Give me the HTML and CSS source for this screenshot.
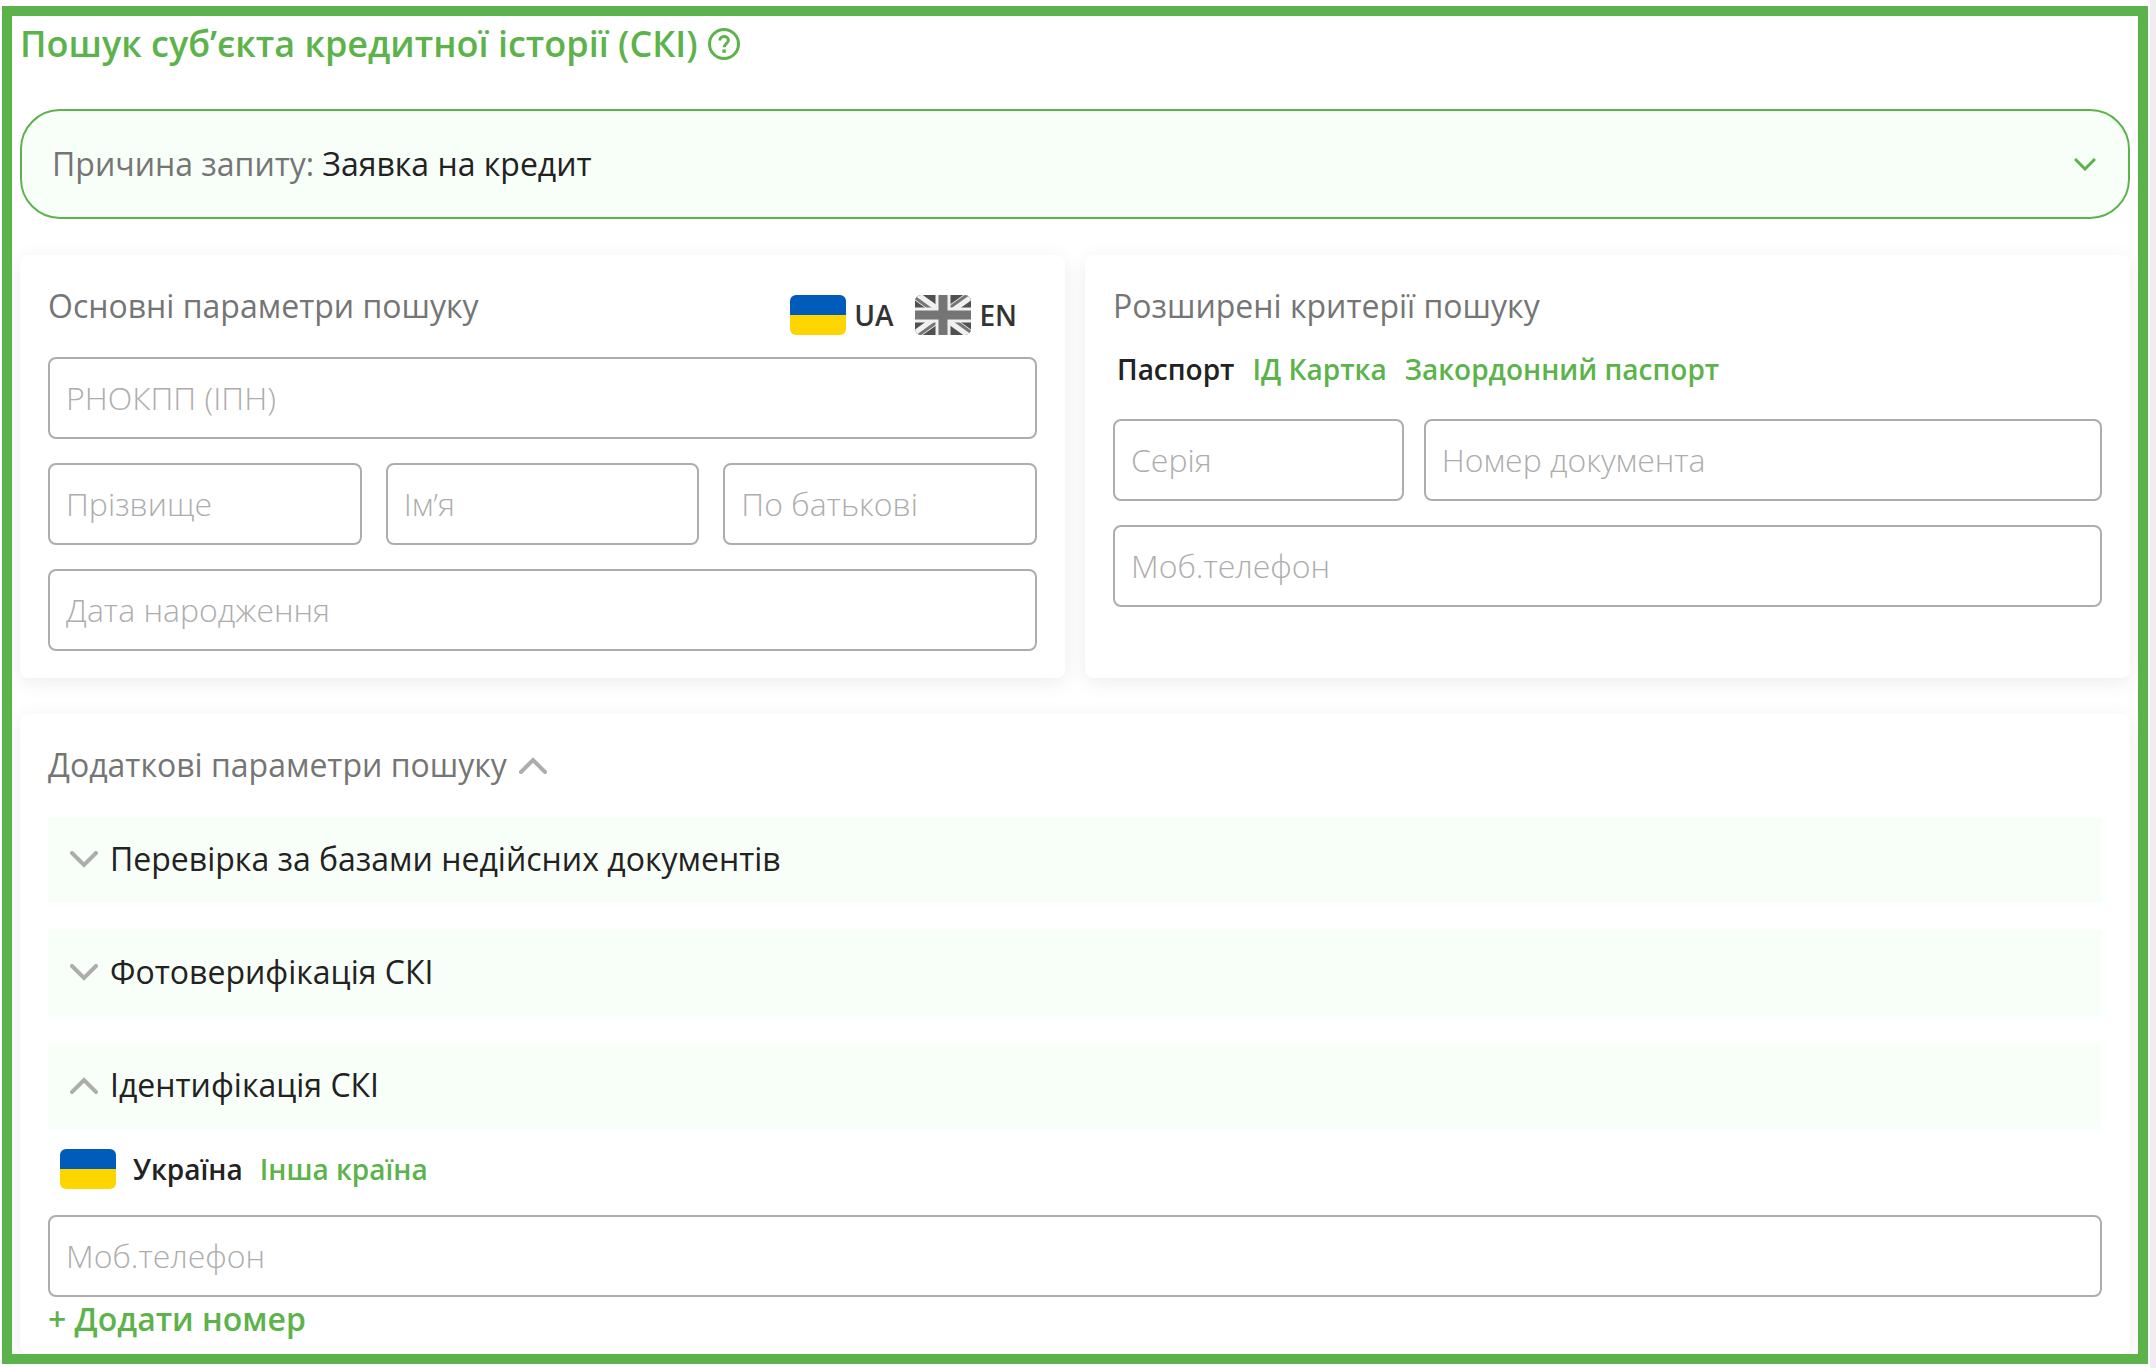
FILE: index.html
```
<!DOCTYPE html>
<html lang="uk">
<head>
    <meta charset="UTF-8">
    <meta name="viewport" content="width=device-width, initial-scale=1.0">
    <title>Пошук суб’єкта кредитної історії (СКІ)</title>
    <link rel="stylesheet" href="styles.css">
</head>
<body>
    <main class="page">
        <form class="frame">
            <div class="title">
                <h1>Пошук суб’єкта кредитної історії (СКІ)</h1>
                <button type="button" class="help" aria-label="Довідка">
                    <svg viewBox="0 0 32 32" width="32" height="32" fill="none" stroke="currentColor" stroke-width="3">
                        <circle cx="16" cy="16" r="14.5"/>
                        <path d="M11.8 12.6c0-2.5 1.8-4.1 4.3-4.1s4.3 1.6 4.3 3.8c0 3.2-4.2 3.5-4.2 7"/>
                        <path d="M16.1 21.4v3.4" stroke-width="3.4"/>
                    </svg>
                </button>
            </div>

            <div class="reason">
                <label for="reason">Причина запиту:</label>
                <select id="reason">
                    <option>Заявка на кредит</option>
                </select>
                <svg class="reason-arrow" viewBox="0 0 22 13" width="22" height="13" fill="none" stroke="currentColor" stroke-width="3">
                    <path d="M1 1l10 10L21 1"/>
                </svg>
            </div>

            <div class="columns">
                <section class="card">
                    <div class="card-header">
                        <h2>Основні параметри пошуку</h2>
                        <div class="languages">
                            <button type="button" class="language">
                                <svg class="flag" viewBox="0 0 56 40" width="56" height="40">
                                    <rect width="56" height="20" fill="#005bbb"/>
                                    <rect y="20" width="56" height="20" fill="#ffd500"/>
                                </svg>
                                UA
                            </button>
                            <button type="button" class="language">
                                <svg class="flag" viewBox="0 0 56 40" width="56" height="40">
                                    <rect width="56" height="40" fill="#505050"/>
                                    <path d="M0 0l56 40M56 0L0 40" stroke="#f0f0f0" stroke-width="9"/>
                                    <path d="M-1 2l25 18M57 38L32 20M55-2L30 16M1 42l25-18" stroke="#757575" stroke-width="3"/>
                                    <path d="M28 0v40M0 20h56" stroke="#f0f0f0" stroke-width="15"/>
                                    <path d="M28 0v40M0 20h56" stroke="#757575" stroke-width="9"/>
                                </svg>
                                EN
                            </button>
                        </div>
                    </div>
                    <div class="fields">
                        <input type="text" placeholder="РНОКПП (ІПН)" aria-label="РНОКПП (ІПН)">
                        <div class="names">
                            <input type="text" placeholder="Прізвище" aria-label="Прізвище">
                            <input type="text" placeholder="Ім’я" aria-label="Ім’я">
                            <input type="text" placeholder="По батькові" aria-label="По батькові">
                        </div>
                        <input type="text" placeholder="Дата народження" aria-label="Дата народження">
                    </div>
                </section>

                <section class="card">
                    <h2>Розширені критерії пошуку</h2>
                    <div class="tabs">
                        <button type="button" class="tab active">Паспорт</button>
                        <button type="button" class="tab">ІД Картка</button>
                        <button type="button" class="tab">Закордонний паспорт</button>
                    </div>
                    <div class="fields">
                        <div class="document">
                            <input type="text" placeholder="Серія" aria-label="Серія">
                            <input type="text" placeholder="Номер документа" aria-label="Номер документа">
                        </div>
                        <input type="tel" placeholder="Моб.телефон" aria-label="Моб.телефон">
                    </div>
                </section>
            </div>

            <section class="card extra">
                <h2>
                    <button type="button" class="extra-toggle" aria-expanded="true">
                        Додаткові параметри пошуку
                        <svg class="chevron" viewBox="0 0 28 17" width="28" height="17"><path d="M2 15L14 3l12 12"/></svg>
                    </button>
                </h2>
                <div class="accordion">
                    <button type="button" class="accordion-item" aria-expanded="false">
                        <svg class="chevron" viewBox="0 0 28 17" width="28" height="17"><path d="M2 2l12 12L26 2"/></svg>
                        Перевірка за базами недійсних документів
                    </button>
                    <button type="button" class="accordion-item" aria-expanded="false">
                        <svg class="chevron" viewBox="0 0 28 17" width="28" height="17"><path d="M2 2l12 12L26 2"/></svg>
                        Фотоверифікація СКІ
                    </button>
                    <button type="button" class="accordion-item" aria-expanded="true">
                        <svg class="chevron" viewBox="0 0 28 17" width="28" height="17"><path d="M2 15L14 3l12 12"/></svg>
                        Ідентифікація СКІ
                    </button>
                </div>
                <div class="country">
                    <svg class="flag" viewBox="0 0 56 40" width="56" height="40">
                        <rect width="56" height="20" fill="#005bbb"/>
                        <rect y="20" width="56" height="20" fill="#ffd500"/>
                    </svg>
                    <button type="button" class="tab active">Україна</button>
                    <button type="button" class="tab">Інша країна</button>
                </div>
                <input type="tel" placeholder="Моб.телефон" aria-label="Моб.телефон">
                <button type="button" class="add">+ Додати номер</button>
            </section>
        </form>
    </main>
</body>
</html>
```
FILE: styles.css
```
* {
    box-sizing: border-box;
}
html {
    background-color: #eee;
}
body {
    margin: 0;
    font-family: "Open Sans", "Noto Sans", sans-serif;
    font-size: 32px;
    line-height: 44px;
    color: #222;
}
.page {
    min-height: 100vh;
    margin-right: 6px;
    padding: 6px 2px 4px;
    background-color: #fff;
}
.frame {
    padding: 3px 8px 0;
    border: 10px solid #5db34b;
    overflow: hidden;
}
h1, h2 {
    margin: 0;
}
h1 {
    font-size: 36px;
    line-height: 50px;
    font-weight: 600;
}
h2 {
    font-size: 32px;
    font-weight: 400;
    color: #757575;
}
button, input, select {
    font: inherit;
    color: inherit;
}
button {
    padding: 0;
    border: none;
    background: none;
    cursor: pointer;
}
svg {
    display: block;
    flex-shrink: 0;
}
input {
    width: 100%;
    min-width: 0;
    height: 82px;
    padding: 0 16px 2px;
    border: 2px solid #adadad;
    border-radius: 8px;
    background-color: #fff;
}
input::placeholder {
    color: #adadad;
    font-weight: 300;
    opacity: 1;
}
.title {
    display: flex;
    align-items: center;
    gap: 10px;
    color: #5db34b;
}
.reason {
    display: flex;
    align-items: center;
    height: 110px;
    margin-top: 40px;
    padding: 0 32px 0 30px;
    border: 2px solid #5db34b;
    border-radius: 40px;
    background-color: #f8fff8;
}
.reason label {
    margin-right: 8px;
    color: #757575;
}
.reason select {
    flex: 1;
    appearance: none;
    padding: 0;
    border: none;
    background: none;
}
.reason-arrow {
    color: #5db34b;
    pointer-events: none;
}
.columns {
    display: grid;
    grid-template-columns: 1fr 1fr;
    gap: 20px;
    margin-top: 36px;
}
.card {
    padding: 29px 28px 27px;
    border-radius: 8px;
    background-color: #fff;
    box-shadow: 0 4px 20px rgba(0, 0, 0, 0.08);
}
.card-header {
    display: flex;
    justify-content: space-between;
    margin-bottom: 22px;
}
.languages {
    display: flex;
    gap: 22px;
    margin-top: 11px;
    margin-right: 20px;
}
.language {
    display: flex;
    align-items: center;
    gap: 8px;
    font-size: 28px;
    line-height: 40px;
    font-weight: 600;
    color: #333;
}
.flag {
    border-radius: 6px;
}
.fields {
    display: grid;
    gap: 24px;
}
.names {
    display: grid;
    grid-template-columns: repeat(3, 1fr);
    gap: 24px;
}
.document {
    display: grid;
    grid-template-columns: 3fr 7fr;
    gap: 20px;
}
.tabs {
    display: flex;
    gap: 18px;
    margin: 21px 4px 30px;
}
.tab {
    font-size: 28px;
    line-height: 40px;
    font-weight: 600;
    color: #5db34b;
}
.tab.active {
    color: #222;
}
.extra {
    margin-top: 36px;
    padding-bottom: 13px;
}
.extra-toggle {
    display: flex;
    align-items: center;
    gap: 12px;
}
.chevron {
    fill: none;
    stroke: #adadad;
    stroke-width: 4;
    stroke-linecap: round;
}
.accordion {
    display: grid;
    gap: 27px;
    margin-top: 30px;
}
.accordion-item {
    display: flex;
    align-items: center;
    gap: 12px;
    height: 86px;
    padding: 0 22px 2px;
    background-color: #f8fff8;
    text-align: left;
}
.country {
    display: flex;
    align-items: center;
    gap: 17px;
    margin: 20px 12px 26px;
}
.add {
    display: block;
    font-weight: 600;
    color: #5db34b;
}
```
